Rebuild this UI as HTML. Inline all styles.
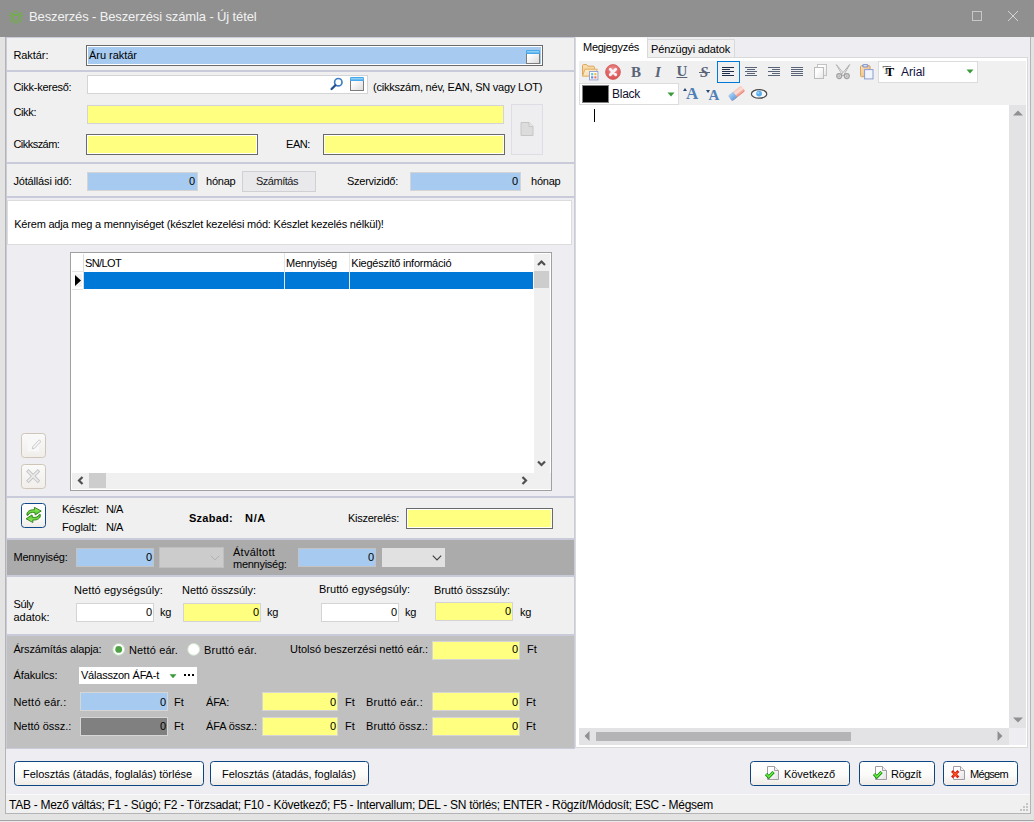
<!DOCTYPE html>
<html lang="hu"><head><meta charset="utf-8"><title>Beszerzés - Beszerzési számla - Új tétel</title>
<style>
html,body{margin:0;padding:0;}
body{width:1034px;height:822px;overflow:hidden;position:relative;background:#f0f0f0;
font-family:"Liberation Sans",sans-serif;font-size:11px;color:#000;}
.a{position:absolute;display:block;}
.t{position:absolute;white-space:nowrap;display:block;}
</style></head>
<body>
<div class="a" style="left:0px;top:0px;width:1034px;height:37px;background:#909090;"></div>
<div class="a" style="left:0px;top:37px;width:1034px;height:785px;background:#e3e3e3;"></div>
<div class="a" style="left:5px;top:37px;width:1026px;height:777px;background:#b4b4b4;"></div>
<div class="a" style="left:6px;top:37px;width:1024px;height:776px;background:#eeeef2;"></div>
<div class="a" style="left:0px;top:820px;width:1034px;height:1px;background:#a4a4a4;"></div>
<div class="a" style="left:0px;top:821px;width:1034px;height:1px;background:#e8e8ec;"></div>
<svg class="a" style="left:9px;top:10px" width="15" height="15" viewBox="0 0 15 15">
<g fill="none" stroke="#6db43f" stroke-width="1.45" stroke-linecap="round">
<path d="M2.2 3.1Q7 7.4 11.8 3.1"/>
<path d="M0.8 5.4Q5.2 6.6 5.4 13"/>
<path d="M13.2 5.4Q8.8 6.6 8.6 13"/>
</g><g fill="#6db43f">
<circle cx="5.6" cy="1.4" r="0.85"/><circle cx="8.5" cy="1.4" r="0.85"/>
<circle cx="1" cy="8.7" r="0.9"/><circle cx="2.5" cy="11.2" r="0.85"/>
<circle cx="13.1" cy="8.8" r="0.9"/><circle cx="11.6" cy="11.3" r="0.85"/>
</g></svg>
<span class="t" id="t1" style="top:9px;font-size:13px;line-height:16px;left:29px;color:#f2f2f2;letter-spacing:-0.128px;">Beszerzés - Beszerzési számla - Új tétel</span>
<div class="a" style="left:972px;top:11px;width:10px;height:10px;border:1px solid #c8c8c8;box-sizing:border-box;"></div>
<svg class="a" style="left:1007px;top:10px" width="12" height="12" viewBox="0 0 12 12"><path d="M1 1L11 11M11 1L1 11" stroke="#d4d4d4" stroke-width="1" fill="none"/></svg>
<div class="a" style="left:6px;top:37px;width:569px;height:712px;background:#c9cbdb;"></div>
<div class="a" style="left:7px;top:38px;width:567px;height:710px;background:#f0f0f0;"></div>
<span class="t" id="t2" style="top:48px;font-size:11px;line-height:14px;left:13.4px;letter-spacing:-0.067px;">Raktár:</span>
<div class="a" style="left:86px;top:45px;width:457px;height:21px;background:#fff;border:1px solid #6a6a6a;box-sizing:border-box;"></div>
<div class="a" style="left:88px;top:47px;width:453px;height:17px;background:#a6caf0;"></div>
<span class="t" id="t3" style="top:48px;font-size:11px;line-height:14px;left:89px;letter-spacing:-0.030px;">Áru raktár</span>
<svg class="a" style="left:526px;top:50px" width="14" height="14" viewBox="0 0 14 14">
<defs><linearGradient id="wg526" x1="0" y1="0" x2="1" y2="1"><stop offset="0.2" stop-color="#ffffff"/><stop offset="1" stop-color="#dadada"/></linearGradient></defs>
<rect x="0.5" y="2.5" width="13" height="11" fill="url(#wg526)" stroke="#7c7c7c"/>
<path d="M0 4V1.2Q0 0 1.2 0H12.8Q14 0 14 1.2V4Z" fill="#4aa8e8"/>
<rect x="1" y="1" width="12" height="1.5" fill="#8fd0f6"/>
</svg>
<div class="a" style="left:7px;top:70px;width:567px;height:2px;background:#c9cbdb;"></div>
<span class="t" id="t4" style="top:80px;font-size:11px;line-height:14px;left:13.4px;letter-spacing:-0.261px;">Cikk-kereső:</span>
<div class="a" style="left:87px;top:75px;width:281px;height:19px;background:#fff;border:1px solid #d4d4d4;box-sizing:border-box;"></div>
<svg class="a" style="left:330px;top:77px" width="14" height="14" viewBox="0 0 14 14">
<circle cx="8.3" cy="5.2" r="3.7" fill="#fff" stroke="#3f7fc4" stroke-width="1.7"/>
<path d="M5.4 8.2L1.6 12" stroke="#24508f" stroke-width="2.3" stroke-linecap="round"/></svg>
<svg class="a" style="left:350px;top:77px" width="14" height="14" viewBox="0 0 14 14">
<defs><linearGradient id="wg350" x1="0" y1="0" x2="1" y2="1"><stop offset="0.2" stop-color="#ffffff"/><stop offset="1" stop-color="#dadada"/></linearGradient></defs>
<rect x="0.5" y="2.5" width="13" height="11" fill="url(#wg350)" stroke="#7c7c7c"/>
<path d="M0 4V1.2Q0 0 1.2 0H12.8Q14 0 14 1.2V4Z" fill="#4aa8e8"/>
<rect x="1" y="1" width="12" height="1.5" fill="#8fd0f6"/>
</svg>
<span class="t" id="t5" style="top:80px;font-size:11px;line-height:14px;left:373px;letter-spacing:-0.220px;">(cikkszám, név, EAN, SN vagy LOT)</span>
<span class="t" id="t6" style="top:105px;font-size:11px;line-height:14px;left:13.4px;letter-spacing:-0.349px;">Cikk:</span>
<div class="a" style="left:87px;top:105px;width:417px;height:19px;background:#ffff80;border:1px solid #d4d4d4;box-sizing:border-box;"></div>
<span class="t" id="t7" style="top:137px;font-size:11px;line-height:14px;left:13.4px;letter-spacing:-0.526px;">Cikkszám:</span>
<div class="a" style="left:86px;top:134px;width:172px;height:21px;background:#fff;border:1px solid #6a6a6a;box-sizing:border-box;"></div>
<div class="a" style="left:88px;top:136px;width:168px;height:17px;background:#ffff80;"></div>
<span class="t" id="t8" style="top:137px;font-size:11px;line-height:14px;left:286px;letter-spacing:-0.422px;">EAN:</span>
<div class="a" style="left:323px;top:134px;width:182px;height:21px;background:#fff;border:1px solid #6a6a6a;box-sizing:border-box;"></div>
<div class="a" style="left:325px;top:136px;width:178px;height:17px;background:#ffff80;"></div>
<div class="a" style="left:511px;top:104px;width:32px;height:51px;background:#eeeef1;border:1px solid #dddde4;box-sizing:border-box;"></div>
<svg class="a" style="left:520px;top:121px" width="14" height="16" viewBox="0 0 14 16">
<path d="M1 1.5H9L13 5.5V14.5H1Z" fill="#dcdcdc" stroke="#c6c6c6"/><path d="M9 1.5V5.5H13" fill="#e8e8e8" stroke="#c6c6c6"/></svg>
<div class="a" style="left:7px;top:162px;width:567px;height:2px;background:#c9cbdb;"></div>
<span class="t" id="t9" style="top:174px;font-size:11px;line-height:14px;left:13.4px;letter-spacing:-0.160px;">Jótállási idő:</span>
<div class="a" style="left:87px;top:172px;width:111px;height:19px;background:#a6caf0;border:1px solid #d4d4d4;box-sizing:border-box;"></div>
<span class="t" id="t10" style="top:174px;font-size:11px;line-height:14px;right:839px;">0</span>
<span class="t" id="t11" style="top:174px;font-size:11px;line-height:14px;left:206px;letter-spacing:-0.219px;">hónap</span>
<div class="a" style="left:242px;top:171px;width:74px;height:21px;background:#e9e9ec;border:1px solid #d0d0d4;box-sizing:border-box;"></div>
<span class="t" id="t12" style="top:174px;font-size:11px;line-height:14px;left:256px;color:#202020;letter-spacing:-0.482px;">Számítás</span>
<span class="t" id="t13" style="top:174px;font-size:11px;line-height:14px;left:347px;letter-spacing:-0.255px;">Szervizidő:</span>
<div class="a" style="left:410px;top:172px;width:111px;height:19px;background:#a6caf0;border:1px solid #d4d4d4;box-sizing:border-box;"></div>
<span class="t" id="t14" style="top:174px;font-size:11px;line-height:14px;right:516px;">0</span>
<span class="t" id="t15" style="top:174px;font-size:11px;line-height:14px;left:531px;letter-spacing:-0.219px;">hónap</span>
<div class="a" style="left:7px;top:196px;width:567px;height:2px;background:#c9cbdb;"></div>
<div class="a" style="left:7px;top:198px;width:567px;height:54px;background:#eeeef2;"></div>
<div class="a" style="left:7px;top:200px;width:565px;height:45px;background:#fff;border:1px solid #dcdcdc;box-sizing:border-box;"></div>
<span class="t" id="t16" style="top:217px;font-size:11px;line-height:14px;left:14.2px;letter-spacing:-0.198px;">Kérem adja meg a mennyiséget (készlet kezelési mód: Készlet kezelés nélkül)!</span>
<div class="a" style="left:7px;top:245px;width:567px;height:251px;background:#eeeef2;"></div>
<div class="a" style="left:70px;top:252px;width:482px;height:239px;background:#fff;border:1px solid #a0a0a0;box-sizing:border-box;"></div>
<div class="a" style="left:71px;top:253px;width:462px;height:18px;background:#fff;"></div>
<div class="a" style="left:72px;top:271px;width:11px;height:1px;background:#e6e6e6;"></div>
<div class="a" style="left:72px;top:289px;width:11px;height:1px;background:#e6e6e6;"></div>
<div class="a" style="left:75px;top:274px;width:7px;height:13px;background:#f2f2f2;"></div>
<div class="a" style="left:83px;top:254px;width:1px;height:35px;background:#dcdcdc;"></div>
<div class="a" style="left:284px;top:253px;width:1px;height:36px;background:#e6e6e6;"></div>
<div class="a" style="left:349px;top:253px;width:1px;height:36px;background:#e6e6e6;"></div>
<div class="a" style="left:84px;top:272px;width:200px;height:17px;background:#0078d7;"></div>
<div class="a" style="left:285px;top:272px;width:64px;height:17px;background:#0078d7;"></div>
<div class="a" style="left:350px;top:272px;width:183px;height:17px;background:#0078d7;"></div>
<span class="t" id="t17" style="top:256px;font-size:11px;line-height:14px;left:85px;letter-spacing:-0.622px;">SN/LOT</span>
<span class="t" id="t18" style="top:256px;font-size:11px;line-height:14px;left:286px;letter-spacing:-0.245px;">Mennyiség</span>
<span class="t" id="t19" style="top:256px;font-size:11px;line-height:14px;left:351.3px;letter-spacing:-0.246px;">Kiegészítő információ</span>
<svg class="a" style="left:75px;top:275px" width="6" height="11" viewBox="0 0 6 11"><path d="M0 0V11L6 5.5Z" fill="#000"/></svg>
<div class="a" style="left:534px;top:254px;width:16px;height:219px;background:#f0f0f0;"></div>
<div class="a" style="left:534px;top:271px;width:15px;height:17px;background:#cdcdcd;"></div>
<svg class="a" style="left:537px;top:259px" width="9" height="8" viewBox="0 0 9 8"><path d="M1 6L4.5 2.5L8 6" stroke="#505050" stroke-width="2.2" fill="none"/></svg>
<svg class="a" style="left:537px;top:460px" width="9" height="8" viewBox="0 0 9 8"><path d="M1 1.5L4.5 5L8 1.5" stroke="#505050" stroke-width="2.2" fill="none"/></svg>
<div class="a" style="left:72px;top:473px;width:479px;height:16px;background:#f0f0f0;"></div>
<div class="a" style="left:89px;top:473px;width:17px;height:15px;background:#cdcdcd;"></div>
<svg class="a" style="left:77px;top:476px" width="7" height="9" viewBox="0 0 7 9"><path d="M5.5 1L2 4.5L5.5 8" stroke="#505050" stroke-width="2.2" fill="none"/></svg>
<svg class="a" style="left:521px;top:476px" width="7" height="9" viewBox="0 0 7 9"><path d="M1.5 1L5 4.5L1.5 8" stroke="#505050" stroke-width="2.2" fill="none"/></svg>
<div class="a" style="left:21px;top:433px;width:25px;height:25px;border:1px solid #cfc6b8;box-sizing:border-box;border-radius:3.5px;background:linear-gradient(#fafafa,#f1eeea);"></div>
<svg class="a" style="left:21px;top:433px" width="25" height="25" viewBox="0 0 25 25"><rect x="6.5" y="6" width="11.5" height="12.5" fill="#f8f8f8"/><path d="M11.3 15.9L11.8 13.6L17.6 7.4Q18.4 6.8 19.2 7.5Q19.9 8.3 19.3 9.1L13.5 15.3Z" fill="#f7f7f7" stroke="#c4c4c4" stroke-width="0.9"/></svg>
<div class="a" style="left:21px;top:464px;width:25px;height:25px;border:1px solid #cfc6b8;box-sizing:border-box;border-radius:3.5px;background:linear-gradient(#fafafa,#f1eeea);"></div>
<svg class="a" style="left:21px;top:464px" width="25" height="25" viewBox="0 0 25 25"><path d="M7.5 7.5L16.8 16.8M16.8 7.5L7.5 16.8" stroke="#c2c2c2" stroke-width="3.4" stroke-linecap="square"/><path d="M7.5 7.5L16.8 16.8M16.8 7.5L7.5 16.8" stroke="#ececec" stroke-width="1.7" stroke-linecap="square"/></svg>
<div class="a" style="left:7px;top:496px;width:567px;height:2px;background:#c9cbdb;"></div>
<div class="a" style="left:21px;top:503px;width:25px;height:25px;border:1px solid #0f4a8a;box-sizing:border-box;border-radius:3.5px;background:linear-gradient(#ffffff,#fbfbfa 55%,#f0ece8);"></div>
<svg class="a" style="left:21px;top:503px" width="25" height="25" viewBox="0 0 25 25">
<defs><linearGradient id="gg" x1="0" y1="0" x2="0" y2="1"><stop offset="0" stop-color="#a4f070"/><stop offset="1" stop-color="#3cc41c"/></linearGradient></defs>
<g fill="url(#gg)" stroke="#2a7a14" stroke-width="0.9" stroke-linejoin="round">
<path d="M13.4 4.3L20.2 8L14.3 11.9L13.7 9.4C10.6 9.1 8.1 9.8 7 12.3L6 12.3C5.4 8.6 8.6 6.5 13.5 6.8Z"/>
<path transform="rotate(180 12.65 11.9)" d="M13.4 4.3L20.2 8L14.3 11.9L13.7 9.4C10.6 9.1 8.1 9.8 7 12.3L6 12.3C5.4 8.6 8.6 6.5 13.5 6.8Z"/>
</g></svg>
<span class="t" id="t20" style="top:502px;font-size:11px;line-height:14px;left:62px;letter-spacing:-0.268px;">Készlet:</span>
<span class="t" id="t21" style="top:502px;font-size:11px;line-height:14px;left:106px;letter-spacing:-0.448px;">N/A</span>
<span class="t" id="t22" style="top:520px;font-size:11px;line-height:14px;left:62px;letter-spacing:-0.135px;">Foglalt:</span>
<span class="t" id="t23" style="top:520px;font-size:11px;line-height:14px;left:106px;letter-spacing:-0.448px;">N/A</span>
<span class="t" id="t24" style="top:511px;font-size:11px;line-height:14px;left:189px;font-weight:bold;letter-spacing:0.259px;">Szabad:</span>
<span class="t" id="t25" style="top:511px;font-size:11px;line-height:14px;left:245px;font-weight:bold;letter-spacing:0.682px;">N/A</span>
<span class="t" id="t26" style="top:511px;font-size:11px;line-height:14px;left:348px;letter-spacing:-0.255px;">Kiszerelés:</span>
<div class="a" style="left:406px;top:508px;width:147px;height:21px;background:#fff;border:1px solid #6a6a6a;box-sizing:border-box;"></div>
<div class="a" style="left:408px;top:510px;width:143px;height:17px;background:#ffff80;"></div>
<div class="a" style="left:7px;top:538px;width:567px;height:2px;background:#c9cbdb;"></div>
<div class="a" style="left:7px;top:540px;width:567px;height:35px;background:#ababab;"></div>
<span class="t" id="t27" style="top:550px;font-size:11px;line-height:14px;left:13.5px;letter-spacing:-0.225px;">Mennyiség:</span>
<div class="a" style="left:76px;top:548px;width:78px;height:19px;background:#a6caf0;border:1px solid #c4c4c4;box-sizing:border-box;"></div>
<span class="t" id="t28" style="top:550px;font-size:11px;line-height:14px;right:882px;">0</span>
<div class="a" style="left:159px;top:547px;width:65px;height:21px;background:#cccccc;border:1px solid #bfbfbf;box-sizing:border-box;"></div>
<svg class="a" style="left:210px;top:555px" width="10" height="6" viewBox="0 0 10 6"><path d="M0.8 0.7L5 4.9L9.2 0.7" stroke="#b0b0b0" stroke-width="1" fill="none"/></svg>
<span class="t" id="t29" style="top:545px;font-size:11px;line-height:14px;left:233px;letter-spacing:0.250px;">Átváltott</span>
<span class="t" id="t30" style="top:557px;font-size:11px;line-height:14px;left:233px;letter-spacing:-0.275px;">mennyiség:</span>
<div class="a" style="left:298px;top:548px;width:78px;height:19px;background:#a6caf0;border:1px solid #c4c4c4;box-sizing:border-box;"></div>
<span class="t" id="t31" style="top:550px;font-size:11px;line-height:14px;right:660px;">0</span>
<div class="a" style="left:382px;top:548px;width:63px;height:19px;background:#e1e1e1;"></div>
<svg class="a" style="left:432px;top:555px" width="10" height="6" viewBox="0 0 10 6"><path d="M0.8 0.7L5 4.9L9.2 0.7" stroke="#404040" stroke-width="1.2" fill="none"/></svg>
<div class="a" style="left:7px;top:575px;width:567px;height:2px;background:#c9cbdb;"></div>
<span class="t" id="t32" style="top:583px;font-size:11px;line-height:14px;left:74px;letter-spacing:0.092px;">Nettó egységsúly:</span>
<span class="t" id="t33" style="top:583px;font-size:11px;line-height:14px;left:182px;letter-spacing:-0.039px;">Nettó összsúly:</span>
<span class="t" id="t34" style="top:582px;font-size:11px;line-height:14px;left:319px;letter-spacing:0.028px;">Bruttó egységsúly:</span>
<span class="t" id="t35" style="top:583px;font-size:11px;line-height:14px;left:434px;letter-spacing:-0.103px;">Bruttó összsúly:</span>
<span class="t" id="t36" style="top:597px;font-size:11px;line-height:14px;left:13.5px;letter-spacing:-0.352px;">Súly</span>
<span class="t" id="t37" style="top:610px;font-size:11px;line-height:14px;left:13.5px;letter-spacing:-0.013px;">adatok:</span>
<div class="a" style="left:76px;top:603px;width:78px;height:19px;background:#fff;border:1px solid #d4d4d4;box-sizing:border-box;"></div>
<span class="t" id="t38" style="top:605px;font-size:11px;line-height:14px;right:882px;">0</span>
<span class="t" id="t39" style="top:605px;font-size:11px;line-height:14px;left:160px;letter-spacing:-0.312px;">kg</span>
<div class="a" style="left:183px;top:603px;width:78px;height:19px;background:#ffff80;border:1px solid #d4d4d4;box-sizing:border-box;"></div>
<span class="t" id="t40" style="top:605px;font-size:11px;line-height:14px;right:775px;">0</span>
<span class="t" id="t41" style="top:605px;font-size:11px;line-height:14px;left:267px;letter-spacing:-0.312px;">kg</span>
<div class="a" style="left:321px;top:603px;width:78px;height:19px;background:#fff;border:1px solid #d4d4d4;box-sizing:border-box;"></div>
<span class="t" id="t42" style="top:605px;font-size:11px;line-height:14px;right:637px;">0</span>
<span class="t" id="t43" style="top:605px;font-size:11px;line-height:14px;left:405px;letter-spacing:-0.312px;">kg</span>
<div class="a" style="left:435px;top:602px;width:78px;height:19px;background:#ffff80;border:1px solid #d4d4d4;box-sizing:border-box;"></div>
<span class="t" id="t44" style="top:604px;font-size:11px;line-height:14px;right:523px;">0</span>
<span class="t" id="t45" style="top:605px;font-size:11px;line-height:14px;left:520px;letter-spacing:-0.312px;">kg</span>
<div class="a" style="left:7px;top:634px;width:567px;height:2px;background:#c9cbdb;"></div>
<div class="a" style="left:7px;top:636px;width:567px;height:112px;background:#c0c0c0;"></div>
<span class="t" id="t46" style="top:642px;font-size:11px;line-height:14px;left:13.4px;letter-spacing:-0.138px;">Árszámítás alapja:</span>
<svg class="a" style="left:111px;top:642px" width="15" height="15" viewBox="0 0 15 15"><circle cx="7.7" cy="7.4" r="5.9" fill="#fff" stroke="#c4e0c0"/><circle cx="7.7" cy="7.4" r="3.4" fill="#4fa344"/></svg>
<span class="t" id="t47" style="top:643px;font-size:11px;line-height:14px;left:129px;letter-spacing:0.130px;">Nettó eár.</span>
<svg class="a" style="left:186px;top:642px" width="15" height="15" viewBox="0 0 15 15"><circle cx="7.7" cy="7.4" r="5.9" fill="#fff" stroke="#d4e8d0"/></svg>
<span class="t" id="t48" style="top:643px;font-size:11px;line-height:14px;left:204px;letter-spacing:0.204px;">Bruttó eár.</span>
<span class="t" id="t49" style="top:642px;font-size:11px;line-height:14px;left:290px;letter-spacing:-0.028px;">Utolsó beszerzési nettó eár.:</span>
<div class="a" style="left:432px;top:641px;width:88px;height:19px;background:#ffff80;border:1px solid #d6d6d6;box-sizing:border-box;"></div>
<span class="t" id="t50" style="top:642px;font-size:11px;line-height:14px;right:516px;">0</span>
<span class="t" id="t51" style="top:642px;font-size:11px;line-height:14px;left:527px;letter-spacing:0.109px;">Ft</span>
<span class="t" id="t52" style="top:668px;font-size:11px;line-height:14px;left:13.4px;letter-spacing:-0.071px;">Áfakulcs:</span>
<div class="a" style="left:79px;top:667px;width:118px;height:17px;background:#fff;"></div>
<span class="t" id="t53" style="top:668px;font-size:11px;line-height:14px;left:81px;letter-spacing:-0.221px;">Válasszon ÁFA-t</span>
<svg class="a" style="left:168.5px;top:674px" width="8" height="5" viewBox="0 0 8 5"><path d="M0.5 0.3H7.5L4 4.3Z" fill="#3a9a3a"/></svg>
<svg class="a" style="left:184px;top:674px" width="10" height="2" viewBox="0 0 10 2" shape-rendering="crispEdges"><rect x="0" y="0" width="2" height="2" fill="#000"/><rect x="4" y="0" width="2" height="2" fill="#000"/><rect x="8" y="0" width="2" height="2" fill="#000"/></svg>
<span class="t" id="t54" style="top:695px;font-size:11px;line-height:14px;left:13.4px;letter-spacing:0.204px;">Nettó eár.:</span>
<div class="a" style="left:80px;top:692px;width:88px;height:19px;background:#a6caf0;border:1px solid #d6d6d6;box-sizing:border-box;"></div>
<span class="t" id="t55" style="top:695px;font-size:11px;line-height:14px;right:868px;">0</span>
<span class="t" id="t56" style="top:695px;font-size:11px;line-height:14px;left:174px;letter-spacing:0.109px;">Ft</span>
<span class="t" id="t57" style="top:695px;font-size:11px;line-height:14px;left:206px;letter-spacing:-0.211px;">ÁFA:</span>
<div class="a" style="left:262px;top:692px;width:76px;height:19px;background:#ffff80;border:1px solid #d6d6d6;box-sizing:border-box;"></div>
<span class="t" id="t58" style="top:695px;font-size:11px;line-height:14px;right:698px;">0</span>
<span class="t" id="t59" style="top:695px;font-size:11px;line-height:14px;left:345px;letter-spacing:0.109px;">Ft</span>
<span class="t" id="t60" style="top:695px;font-size:11px;line-height:14px;left:366px;letter-spacing:0.266px;">Bruttó eár.:</span>
<div class="a" style="left:432px;top:692px;width:88px;height:19px;background:#ffff80;border:1px solid #d6d6d6;box-sizing:border-box;"></div>
<span class="t" id="t61" style="top:695px;font-size:11px;line-height:14px;right:516px;">0</span>
<span class="t" id="t62" style="top:695px;font-size:11px;line-height:14px;left:526px;letter-spacing:0.109px;">Ft</span>
<span class="t" id="t63" style="top:719px;font-size:11px;line-height:14px;left:13.4px;letter-spacing:-0.007px;">Nettó össz.:</span>
<div class="a" style="left:80px;top:717px;width:88px;height:19px;background:#808080;border:1px solid #d6d6d6;box-sizing:border-box;"></div>
<span class="t" id="t64" style="top:719px;font-size:11px;line-height:14px;right:868px;">0</span>
<span class="t" id="t65" style="top:719px;font-size:11px;line-height:14px;left:174px;letter-spacing:0.109px;">Ft</span>
<span class="t" id="t66" style="top:719px;font-size:11px;line-height:14px;left:206px;letter-spacing:-0.097px;">ÁFA össz.:</span>
<div class="a" style="left:262px;top:717px;width:76px;height:19px;background:#ffff80;border:1px solid #d6d6d6;box-sizing:border-box;"></div>
<span class="t" id="t67" style="top:719px;font-size:11px;line-height:14px;right:698px;">0</span>
<span class="t" id="t68" style="top:719px;font-size:11px;line-height:14px;left:345px;letter-spacing:0.109px;">Ft</span>
<span class="t" id="t69" style="top:719px;font-size:11px;line-height:14px;left:366px;letter-spacing:0.066px;">Bruttó össz.:</span>
<div class="a" style="left:432px;top:717px;width:88px;height:19px;background:#ffff80;border:1px solid #d6d6d6;box-sizing:border-box;"></div>
<span class="t" id="t70" style="top:719px;font-size:11px;line-height:14px;right:516px;">0</span>
<span class="t" id="t71" style="top:719px;font-size:11px;line-height:14px;left:526px;letter-spacing:0.109px;">Ft</span>
<div class="a" style="left:14px;top:761px;width:190px;height:25px;border:1px solid #0c4582;box-sizing:border-box;border-radius:3.5px;background:linear-gradient(#ffffff,#fbfbfa 55%,#efebe6);"></div>
<span class="t" id="t72" style="top:767px;font-size:11px;line-height:14px;left:23px;letter-spacing:-0.044px;">Felosztás (átadás, foglalás) törlése</span>
<div class="a" style="left:210px;top:761px;width:159px;height:25px;border:1px solid #0c4582;box-sizing:border-box;border-radius:3.5px;background:linear-gradient(#ffffff,#fbfbfa 55%,#efebe6);"></div>
<span class="t" id="t73" style="top:767px;font-size:11px;line-height:14px;left:222px;letter-spacing:-0.019px;">Felosztás (átadás, foglalás)</span>
<div class="a" style="left:750px;top:761px;width:100px;height:25px;border:1px solid #0c4582;box-sizing:border-box;border-radius:3.5px;background:linear-gradient(#ffffff,#fbfbfa 55%,#efebe6);"></div>
<span class="t" id="t74" style="top:767px;font-size:11px;line-height:14px;left:784px;letter-spacing:-0.041px;">Következő</span>
<svg class="a" style="left:765px;top:765px" width="16" height="16" viewBox="0 0 16 16">
<defs><linearGradient id="dg765" x1="0" y1="0" x2="1" y2="1"><stop offset="0.3" stop-color="#ffffff"/><stop offset="1" stop-color="#e2e2e2"/></linearGradient></defs>
<path d="M2.5 1.5H9.5L13.5 5.5V14.5H2.5Z" fill="url(#dg765)" stroke="#a49ca4"/><path d="M9.5 1.5V5.5H13.5" fill="#f4f4f4" stroke="#a49ca4"/><path d="M1 9L3.8 12L8.6 7" stroke="#128012" stroke-width="3.2" fill="none" stroke-linejoin="miter"/><path d="M1.3 9.2L3.8 11.8L8.3 7.2" stroke="#6cf040" stroke-width="1.5" fill="none"/></svg>
<div class="a" style="left:859px;top:761px;width:76px;height:25px;border:1px solid #0c4582;box-sizing:border-box;border-radius:3.5px;background:linear-gradient(#ffffff,#fbfbfa 55%,#efebe6);"></div>
<span class="t" id="t75" style="top:767px;font-size:11px;line-height:14px;left:891px;letter-spacing:-0.299px;">Rögzít</span>
<svg class="a" style="left:873px;top:765px" width="16" height="16" viewBox="0 0 16 16">
<defs><linearGradient id="dg873" x1="0" y1="0" x2="1" y2="1"><stop offset="0.3" stop-color="#ffffff"/><stop offset="1" stop-color="#e2e2e2"/></linearGradient></defs>
<path d="M2.5 1.5H9.5L13.5 5.5V14.5H2.5Z" fill="url(#dg873)" stroke="#a49ca4"/><path d="M9.5 1.5V5.5H13.5" fill="#f4f4f4" stroke="#a49ca4"/><path d="M1 9L3.8 12L8.6 7" stroke="#128012" stroke-width="3.2" fill="none" stroke-linejoin="miter"/><path d="M1.3 9.2L3.8 11.8L8.3 7.2" stroke="#6cf040" stroke-width="1.5" fill="none"/></svg>
<div class="a" style="left:943px;top:761px;width:75px;height:25px;border:1px solid #0c4582;box-sizing:border-box;border-radius:3.5px;background:linear-gradient(#ffffff,#fbfbfa 55%,#efebe6);"></div>
<span class="t" id="t76" style="top:767px;font-size:11px;line-height:14px;left:970px;letter-spacing:-0.698px;">Mégsem</span>
<svg class="a" style="left:951px;top:765px" width="16" height="16" viewBox="0 0 16 16">
<defs><linearGradient id="dg951" x1="0" y1="0" x2="1" y2="1"><stop offset="0.3" stop-color="#ffffff"/><stop offset="1" stop-color="#e2e2e2"/></linearGradient></defs>
<path d="M2.5 1.5H9.5L13.5 5.5V14.5H2.5Z" fill="url(#dg951)" stroke="#a49ca4"/><path d="M9.5 1.5V5.5H13.5" fill="#f4f4f4" stroke="#a49ca4"/><path d="M1 6L7.4 12.4M7.4 6L1 12.4" stroke="#d81818" stroke-width="2.7" fill="none"/><path d="M2 7L6.4 11.4M6.4 7L2 11.4" stroke="#f85818" stroke-width="1.3" fill="none"/></svg>
<div class="a" style="left:6px;top:794px;width:1024px;height:1px;background:#fafafa;"></div>
<div class="a" style="left:6px;top:795px;width:1024px;height:18px;background:#f0f0f0;"></div>
<span class="t" id="t77" style="top:798px;font-size:12px;line-height:15px;left:9px;letter-spacing:-0.279px;">TAB - Mező váltás; F1 - Súgó; F2 - Törzsadat; F10 - Következő; F5 - Intervallum; DEL - SN törlés; ENTER - Rögzít/Módosít; ESC - Mégsem</span>
<svg class="a" style="left:1019px;top:802px" width="10" height="10" viewBox="0 0 10 10"><g fill="#c4c4c4"><rect x="7" y="1" width="2" height="2"/><rect x="4" y="4" width="2" height="2"/><rect x="7" y="4" width="2" height="2"/><rect x="1" y="7" width="2" height="2"/><rect x="4" y="7" width="2" height="2"/><rect x="7" y="7" width="2" height="2"/></g></svg>
<div class="a" style="left:575px;top:57px;width:453px;height:691px;background:#fff;border:1px solid #d9d9d9;box-sizing:border-box;"></div>
<div class="a" style="left:579px;top:61px;width:447px;height:44px;background:#f0f0f0;"></div>
<div class="a" style="left:647px;top:39px;width:88px;height:18px;background:#f0f0f0;border:1px solid #d9d9d9;box-sizing:border-box;border-bottom:none;"></div>
<div class="a" style="left:575px;top:37px;width:73px;height:21px;background:#fff;border:1px solid #d9d9d9;box-sizing:border-box;border-bottom:none;border-top-color:#f4f4f4;"></div>
<span class="t" id="t78" style="top:40px;font-size:11px;line-height:14px;left:583px;letter-spacing:-0.270px;">Megjegyzés</span>
<span class="t" id="t79" style="top:42px;font-size:11px;line-height:14px;left:651px;letter-spacing:-0.156px;">Pénzügyi adatok</span>
<svg class="a" style="left:582px;top:64px" width="17" height="17" viewBox="0 0 17 17">
<defs><linearGradient id="fg1" x1="0" y1="0" x2="0" y2="1"><stop offset="0" stop-color="#fbe3b4"/><stop offset="1" stop-color="#f0bd78"/></linearGradient>
<linearGradient id="fg2" x1="0" y1="0" x2="1" y2="1"><stop offset="0" stop-color="#fff4dc"/><stop offset="1" stop-color="#f6cf96"/></linearGradient></defs>
<path d="M0.5 11.5V1.6Q0.5 0.6 1.5 0.6H4.6L5.8 2.2H11.4Q12.4 2.2 12.4 3.2V5.5" fill="url(#fg1)" stroke="#d9a45c"/>
<path d="M3 5.2H15.3L12.6 12.2H0.5Z" fill="url(#fg2)" stroke="#dfae68"/>
<rect x="7.5" y="7.5" width="8.4" height="8.4" fill="#fdfdff" stroke="#97a6d2"/>
<rect x="9.1" y="9.1" width="2.2" height="2.2" fill="#5fc6d6"/><rect x="12.3" y="9.1" width="2.2" height="2.2" fill="#f0c040"/><rect x="9.1" y="12.3" width="2.2" height="2.2" fill="#5a86e0"/><rect x="12.3" y="12.3" width="2.2" height="2.2" fill="#f07858"/>
</svg>
<svg class="a" style="left:605px;top:64px" width="16" height="16" viewBox="0 0 16 16">
<defs><radialGradient id="rg" cx="0.5" cy="0.35" r="0.7"><stop offset="0" stop-color="#f09090"/><stop offset="1" stop-color="#d84848"/></radialGradient></defs>
<circle cx="8" cy="8" r="7.4" fill="url(#rg)" stroke="#d46464" stroke-width="0.9"/>
<path d="M5.3 5.3L10.7 10.7M10.7 5.3L5.3 10.7" stroke="#f3f3f8" stroke-width="3" stroke-linecap="round"/></svg>
<span class="t" id="t80" style="top:63px;font-size:15px;line-height:18px;left:631px;font-weight:bold;color:#5a6478;font-family:'Liberation Serif',serif;">B</span>
<span class="t" id="t81" style="top:63px;font-size:15px;line-height:18px;left:655px;font-weight:bold;color:#5a6478;font-family:'Liberation Serif',serif;font-style:italic;">I</span>
<span class="t" id="t82" style="top:62px;font-size:15px;line-height:18px;left:676.5px;font-weight:bold;color:#5a6478;font-family:'Liberation Serif',serif;text-decoration:underline;">U</span>
<span class="t" id="t83" style="top:63px;font-size:15px;line-height:18px;left:700px;font-weight:bold;color:#5a6478;font-family:'Liberation Serif',serif;font-style:italic;">S</span>
<div class="a" style="left:699px;top:72px;width:11px;height:1px;background:#5a6478;"></div>
<div class="a" style="left:717px;top:61px;width:23px;height:22px;border:1px solid #0078d7;box-sizing:border-box;"></div>
<svg class="a" style="left:722px;top:67px" width="12" height="9" viewBox="0 0 12 9" shape-rendering="crispEdges"><rect x="0" y="0" width="12" height="1" fill="#1e2e4a"/><rect x="0" y="2" width="8" height="1" fill="#1e2e4a"/><rect x="0" y="4" width="12" height="1" fill="#1e2e4a"/><rect x="0" y="6" width="8" height="1" fill="#1e2e4a"/><rect x="0" y="8" width="12" height="1" fill="#1e2e4a"/></svg>
<svg class="a" style="left:745px;top:67px" width="12" height="9" viewBox="0 0 12 9" shape-rendering="crispEdges"><rect x="0" y="0" width="12" height="1" fill="#5a6478"/><rect x="2" y="2" width="8" height="1" fill="#5a6478"/><rect x="0" y="4" width="12" height="1" fill="#5a6478"/><rect x="2" y="6" width="8" height="1" fill="#5a6478"/><rect x="0" y="8" width="12" height="1" fill="#5a6478"/></svg>
<svg class="a" style="left:768px;top:67px" width="12" height="9" viewBox="0 0 12 9" shape-rendering="crispEdges"><rect x="0" y="0" width="12" height="1" fill="#5a6478"/><rect x="4" y="2" width="8" height="1" fill="#5a6478"/><rect x="0" y="4" width="12" height="1" fill="#5a6478"/><rect x="4" y="6" width="8" height="1" fill="#5a6478"/><rect x="0" y="8" width="12" height="1" fill="#5a6478"/></svg>
<svg class="a" style="left:791px;top:67px" width="12" height="9" viewBox="0 0 12 9" shape-rendering="crispEdges"><rect x="0" y="0" width="12" height="1" fill="#5a6478"/><rect x="0" y="2" width="12" height="1" fill="#5a6478"/><rect x="0" y="4" width="12" height="1" fill="#5a6478"/><rect x="0" y="6" width="12" height="1" fill="#5a6478"/><rect x="0" y="8" width="12" height="1" fill="#5a6478"/></svg>
<svg class="a" style="left:814px;top:64px" width="14" height="16" viewBox="0 0 14 16">
<defs><linearGradient id="cg" x1="0" y1="0" x2="1" y2="1"><stop offset="0.3" stop-color="#ffffff"/><stop offset="1" stop-color="#e6e6e6"/></linearGradient></defs>
<rect x="3.5" y="0.5" width="9" height="11" fill="url(#cg)" stroke="#c2c2c2"/><rect x="0.5" y="3.5" width="9" height="11" fill="url(#cg)" stroke="#bcbcbc"/></svg>
<svg class="a" style="left:835px;top:64px" width="16" height="16" viewBox="0 0 16 16">
<path d="M1.3 0.6L9.6 10.4L7.6 11.6Z" fill="#f6f6f6" stroke="#a8a8a8" stroke-width="0.8" stroke-linejoin="round"/>
<path d="M14.7 0.6L6.4 10.4L8.4 11.6Z" fill="#f6f6f6" stroke="#a0a0a0" stroke-width="0.8" stroke-linejoin="round"/>
<circle cx="4.2" cy="12.1" r="2.5" fill="#d8d8d8" stroke="#a0a0a0" stroke-width="1.2"/><circle cx="11.8" cy="12.1" r="2.5" fill="#d8d8d8" stroke="#a0a0a0" stroke-width="1.2"/>
<circle cx="4.2" cy="12.1" r="0.7" fill="#909090"/><circle cx="11.8" cy="12.1" r="0.7" fill="#909090"/></svg>
<svg class="a" style="left:860px;top:64px" width="14" height="16" viewBox="0 0 14 16">
<defs><linearGradient id="pg" x1="0" y1="0" x2="1" y2="1"><stop offset="0" stop-color="#fbe2bc"/><stop offset="1" stop-color="#e6b478"/></linearGradient></defs>
<rect x="0.5" y="1.7" width="9.6" height="11" rx="1" fill="url(#pg)" stroke="#d4a468"/>
<rect x="2.6" y="0.5" width="5.4" height="2.6" rx="0.9" fill="#a4b2da" stroke="#8090c4" stroke-width="0.8"/>
<rect x="3.9" y="1.3" width="2.8" height="0.9" fill="#f4f6fc"/>
<rect x="4.6" y="5.6" width="8.4" height="9.3" fill="#f0f4fc" stroke="#8c9cd2"/></svg>
<div class="a" style="left:878px;top:61px;width:100px;height:22px;background:#fff;border:1px solid #dcdcdc;box-sizing:border-box;"></div>
<span class="t" id="t84" style="top:62px;font-size:13px;line-height:16px;left:882.5px;font-weight:bold;color:#686868;font-family:'Liberation Serif',serif;">T</span>
<span class="t" id="t85" style="top:64px;font-size:13px;line-height:16px;left:885.5px;font-weight:bold;color:#000;font-family:'Liberation Serif',serif;text-shadow:-1px 0 0 #fff,0 -1px 0 #fff,-1px -1px 0 #fff;">T</span>
<span class="t" id="t86" style="top:65px;font-size:12px;line-height:15px;left:901px;color:#101040;">Arial</span>
<svg class="a" style="left:966px;top:69px" width="8" height="5" viewBox="0 0 8 5"><path d="M0.5 0.5H7.5L4 4.5Z" fill="#3a9a3a"/></svg>
<div class="a" style="left:579px;top:83px;width:100px;height:22px;background:#fff;border:1px solid #dcdcdc;box-sizing:border-box;"></div>
<div class="a" style="left:582px;top:85px;width:27px;height:18px;background:#000;border:1px solid #808080;box-sizing:border-box;"></div>
<span class="t" id="t87" style="top:87px;font-size:12px;line-height:15px;left:612px;color:#101030;letter-spacing:-0.269px;">Black</span>
<svg class="a" style="left:666.5px;top:91.7px" width="8" height="5" viewBox="0 0 8 5"><path d="M0.5 0.5H7.5L4 4.5Z" fill="#3a9a3a"/></svg>
<span class="t" id="t88" style="top:84px;font-size:17px;line-height:20px;left:686px;font-weight:bold;color:#4f7fb5;font-family:'Liberation Serif',serif;">A</span>
<svg class="a" style="left:683px;top:88px" width="4" height="3" viewBox="0 0 4 3"><path d="M0 3L2 0L4 3Z" fill="#28466e"/></svg>
<span class="t" id="t89" style="top:86px;font-size:15px;line-height:18px;left:708.5px;font-weight:bold;color:#4f7fb5;font-family:'Liberation Serif',serif;">A</span>
<svg class="a" style="left:706px;top:90px" width="4" height="3" viewBox="0 0 4 3"><path d="M0 0L2 3L4 0Z" fill="#28466e"/></svg>
<svg class="a" style="left:728px;top:86px" width="18" height="15" viewBox="0 0 18 15">
<defs><linearGradient id="er1" x1="0" y1="0" x2="0" y2="1"><stop offset="0" stop-color="#f8c4b8"/><stop offset="0.45" stop-color="#fde0d8"/><stop offset="1" stop-color="#e88070"/></linearGradient>
<linearGradient id="er2" x1="0" y1="0" x2="0" y2="1"><stop offset="0" stop-color="#a8d0f4"/><stop offset="1" stop-color="#6aa0dc"/></linearGradient></defs>
<g transform="rotate(-38 8.6 7.4)">
<rect x="0.3" y="4" width="16.6" height="6.8" rx="1.6" fill="url(#er1)"/>
<path d="M1.9 4H6.8V10.8H1.9Q0.3 10.8 0.3 9.2V5.6Q0.3 4 1.9 4Z" fill="url(#er2)"/>
</g></svg>
<svg class="a" style="left:750px;top:88px" width="18" height="12" viewBox="0 0 18 12">
<ellipse cx="9.1" cy="5.9" rx="7.7" ry="4.3" fill="#f6f8fc" stroke="#484848" stroke-width="1.2"/>
<circle cx="9.1" cy="5.6" r="2.9" fill="#5aaef0"/><circle cx="8.3" cy="4.8" r="1.1" fill="#9fd4fa"/></svg>
<div class="a" style="left:579px;top:105px;width:447px;height:640px;background:#fff;"></div>
<div class="a" style="left:594px;top:109px;width:1px;height:13px;background:#000;"></div>
<div class="a" style="left:1009px;top:105px;width:17px;height:623px;background:#e3e3e6;"></div>
<svg class="a" style="left:1013px;top:110px" width="10" height="6" viewBox="0 0 10 6"><path d="M0 5.5L5 0.5L10 5.5Z" fill="#909090"/></svg>
<svg class="a" style="left:1013px;top:717px" width="10" height="6" viewBox="0 0 10 6"><path d="M0 0.5L5 5.5L10 0.5Z" fill="#909090"/></svg>
<div class="a" style="left:579px;top:728px;width:430px;height:17px;background:#e3e3e6;"></div>
<div class="a" style="left:1009px;top:728px;width:17px;height:17px;background:#eeeef2;"></div>
<div class="a" style="left:596px;top:732px;width:255px;height:9px;background:#b4b4b6;"></div>
<svg class="a" style="left:584px;top:731px" width="6" height="10" viewBox="0 0 6 10"><path d="M5.5 0L0.5 5L5.5 10Z" fill="#909090"/></svg>
<svg class="a" style="left:997px;top:731px" width="6" height="10" viewBox="0 0 6 10"><path d="M0.5 0L5.5 5L0.5 10Z" fill="#909090"/></svg>
</body></html>
